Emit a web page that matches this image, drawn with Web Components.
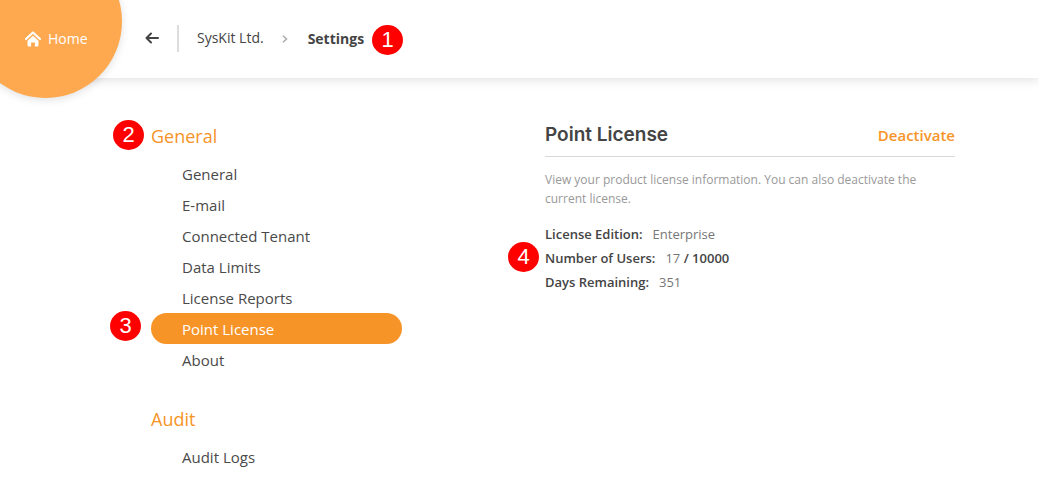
<!DOCTYPE html>
<html lang="en">
<head>
<meta charset="utf-8">
<title>Settings</title>
<meta name="viewport" content="width=device-width, initial-scale=1">
<style>
html, body { margin: 0; background: #fff; }
body { font: 15px/20px "Open Sans", "Noto Sans", sans-serif; color: #444; }
</style>
</head>
<body>
<settings-app></settings-app>
<script>
const define = (name, html, setup) => customElements.define(name, class extends HTMLElement {
  connectedCallback() {
    if (this.shadowRoot) return;
    this.attachShadow({ mode: "open" }).innerHTML = html;
    if (setup) setup(this, this.shadowRoot);
  }
});

define("step-badge", `
<style>
:host { display: flex; align-items: center; justify-content: center; width: 31px; height: 30px; border-radius: 50%;
  background: #f00; color: #fff; font: 22px/30px "Liberation Sans", Arial, sans-serif; }
</style><slot></slot>`);

define("home-link", `
<style>
:host { display: block; width: 153px; height: 153px; border-radius: 50%; background: #fea94f; box-shadow: 0 2px 8px rgba(0,0,0,.12); }
a { display: flex; align-items: center; gap: 7px; box-sizing: border-box; height: 100%; padding: 34px 0 0 56px;
  color: #fff; text-decoration: none; font-size: 14px; line-height: 20px; }
svg { display: block; }
</style>
<a href="#home"><svg width="16" height="16" viewBox="0 0 16 16" aria-hidden="true"><path d="M1 8 8 1.500 15 8" fill="none" stroke="#fff" stroke-width="2.200" stroke-linecap="round" stroke-linejoin="round"/><path d="M2.500 9.800 8 4.800l5.500 5V14q0 1.500-1.500 1.500H9.900V11.500H6.100v4H4Q2.500 15.500 2.500 14z" fill="#fff"/></svg><span>Home</span></a>`);

define("app-header", `
<style>
:host { display: flex; align-items: center; box-sizing: border-box; height: 78px; padding: 0 24px 2px 145px; background: #fff;
  box-shadow: 0 2px 10px rgba(0,0,0,.12); position: relative; }
home-link { position: absolute; left: -31px; top: -55px; }
button { display: flex; padding: 0; border: 0; background: none; cursor: pointer; }
nav { display: flex; align-items: center; margin-left: 18px; padding-left: 18px; border-left: 2px solid #ddd; height: 27px; }
a { color: #444; text-decoration: none; font-size: 14px; line-height: 20px; }
nav svg { margin: 2px 20px 0 18px; }
strong { font-size: 14px; line-height: 20px; font-weight: 700; padding-top: 2px; }
step-badge { margin: 4px 0 0 8px; }
</style>
<home-link></home-link>
<button type="button" aria-label="Back"><svg width="14" height="12" viewBox="0 0 14 12" fill="none" stroke="#444" stroke-width="2" stroke-linecap="round" stroke-linejoin="round" aria-hidden="true"><path d="M6 1.500 1.500 6 6 10.500M2 6H13"/></svg></button>
<nav aria-label="Breadcrumb"><a href="#syskit">SysKit Ltd.</a><svg width="6" height="8" viewBox="0 0 6 8" fill="none" stroke="#aaa" stroke-width="1.500" aria-hidden="true"><path d="M1 .700 4.500 4 1 7.300"/></svg><strong>Settings</strong><step-badge>1</step-badge></nav>`);

define("nav-section", `
<style>
:host { display: block; position: relative; }
h2 { margin: 0 0 10px; font-size: 18px; line-height: 24px; font-weight: 400; color: #f79428; }
nav { display: flex; flex-direction: column; }
</style>
<h2></h2><nav><slot></slot></nav><slot name="badge"></slot>`, (el, root) => {
  root.querySelector("h2").textContent = el.getAttribute("heading");
  root.querySelector("nav").setAttribute("aria-label", el.getAttribute("heading"));
});

define("nav-item", `
<style>
:host { display: block; position: relative; }
a { display: block; padding: 6px 16px 5px 31px; border-radius: 16px; color: #4a4a4a; text-decoration: none; font-size: 15px; line-height: 20px; }
:host([active]) a { background: #f79428; color: #fff; }
</style>
<a><slot></slot></a><slot name="badge"></slot>`, (el, root) => {
  const a = root.querySelector("a");
  a.href = "#" + el.textContent.trim().toLowerCase().replace(/\W+/g, "-");
  if (el.hasAttribute("active")) a.setAttribute("aria-current", "page");
});

define("settings-nav", `
<style>
:host { display: flex; flex-direction: column; gap: 32px; }
step-badge { position: absolute; left: -38px; top: -4px; }
nav-item step-badge { left: -41px; top: -2px; }
</style>
<nav-section heading="General"><step-badge slot="badge">2</step-badge>
<nav-item>General</nav-item><nav-item>E-mail</nav-item><nav-item>Connected Tenant</nav-item><nav-item>Data Limits</nav-item><nav-item>License Reports</nav-item><nav-item active>Point License<step-badge slot="badge">3</step-badge></nav-item><nav-item>About</nav-item>
</nav-section>
<nav-section heading="Audit"><nav-item>Audit Logs</nav-item></nav-section>`);

define("license-panel", `
<style>
:host { display: block; }
header { display: flex; align-items: center; justify-content: space-between; padding-bottom: 9px; margin-top: -1px; border-bottom: 1px solid #d8d8d8; }
h1 { margin: 0; font: 600 19px/24px Inter, sans-serif; }
button { padding: 0; border: 0; background: none; color: #f79428; font: 600 15px/20px "Open Sans", sans-serif; cursor: pointer; }
p { margin: 13px 0 0; font-size: 12px; line-height: 19px; color: #999; }
dl { margin: 14px 0 0; font-size: 13px; line-height: 24px; }
dl div { display: flex; gap: 10px; position: relative; }
dt, b { font-weight: 600; }
dd { margin: 0; color: #777; }
b { color: #444; }
step-badge { position: absolute; left: -37px; top: -4px; }
</style>
<header><h1>Point License</h1><button type="button">Deactivate</button></header>
<p>View your product license information. You can also deactivate the current license.</p>
<dl>
<div><dt>License Edition:</dt><dd>Enterprise</dd></div>
<div><dt>Number of Users:</dt><dd>17 <b>/ 10000</b></dd><step-badge>4</step-badge></div>
<div><dt>Days Remaining:</dt><dd>351</dd></div>
</dl>`);

define("settings-app", `
<style>
:host { display: block; }
main { display: grid; grid-template-columns: minmax(200px, 251px) minmax(0, 1fr); column-gap: 143px; padding: 46px 84px 20px 151px; }
</style>
<app-header></app-header>
<main><settings-nav></settings-nav><license-panel></license-panel></main>`);
</script>
</body>
</html>
